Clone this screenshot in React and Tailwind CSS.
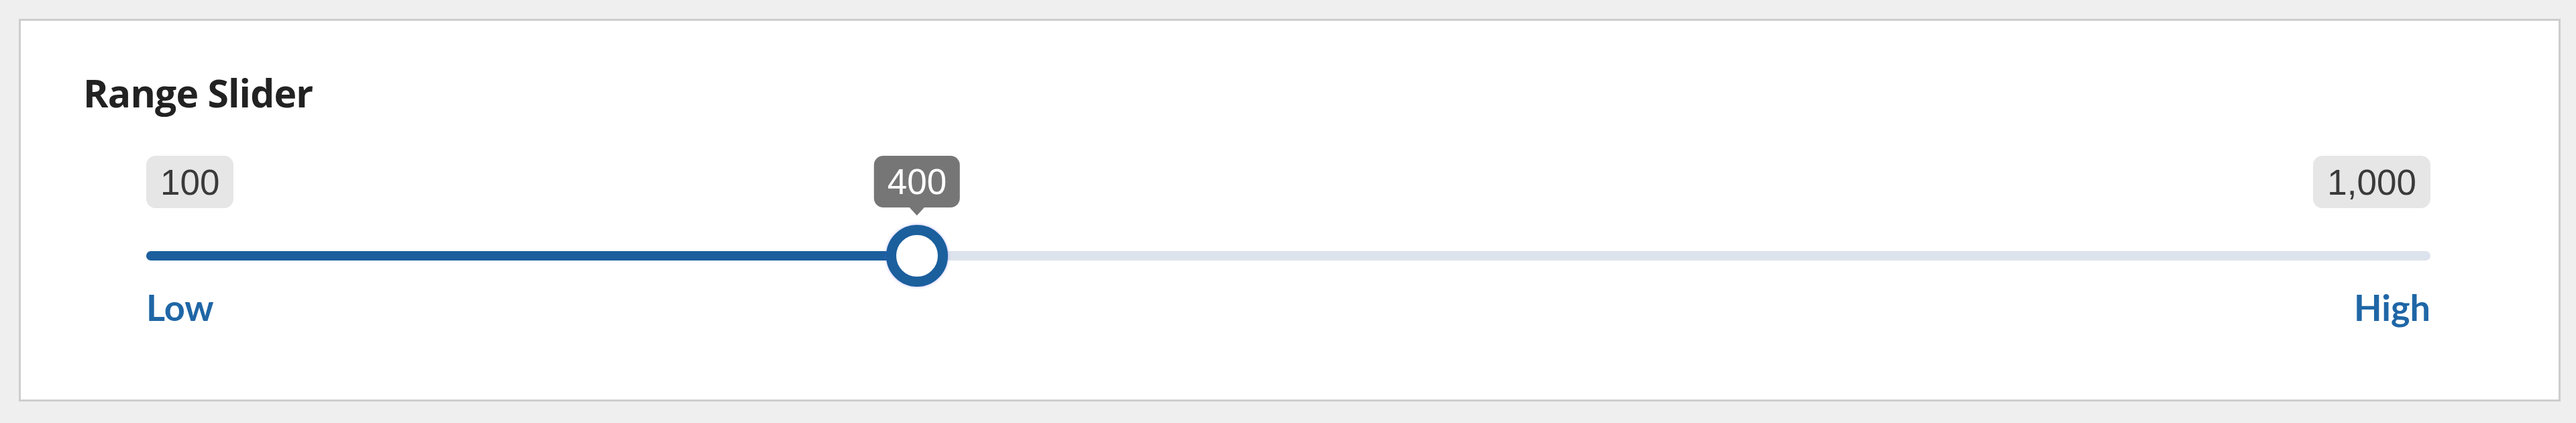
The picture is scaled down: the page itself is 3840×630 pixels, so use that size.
import React from 'react';

const RangeSlider = ({ min, max, value }) => {
  return (
    <div className="ml-[94px] mr-[191px]">
      {/* Bubbles above the track */}
      <div className="relative flex h-[78px] justify-between font-['Liberation_Sans',Arial,sans-serif] text-[53px] leading-none text-[#3a3a3a]">
        <span className="flex h-[78px] items-center rounded-[14px] bg-[#e6e6e6] px-[21px]">{min}</span>
        <div className="absolute top-0 left-[1149px] -translate-x-1/2">
          <div className="flex h-[77px] items-center rounded-[14px] bg-[#767676] px-[20px] text-white">{value}</div>
          <div className="mx-auto h-0 w-0 border-x-[11px] border-t-[12px] border-x-transparent border-t-[#767676]"></div>
        </div>
        <span className="flex h-[78px] items-center rounded-[14px] bg-[#e6e6e6] px-[21px]">{max}</span>
      </div>

      {/* Track */}
      <div className="relative mt-[24px] flex h-[94px] items-center">
        <div className="h-[14px] w-full rounded-full bg-[#dde3ec]"></div>
        <div className="absolute left-0 h-[14px] w-[1149px] rounded-full bg-[#1b5f9d]"></div>
        <div className="absolute left-[1149px] h-[92px] w-[92px] -translate-x-1/2 rounded-full border-[15px] border-[#1b5f9d] bg-white shadow-[0_0_4px_rgba(100,90,255,0.45)]"></div>
      </div>

      <div className="mt-[3px] flex justify-between font-['Lato',sans-serif] text-[54px] font-bold leading-none text-[#1f66a6]">
        <span>Low</span>
        <span>High</span>
      </div>
    </div>
  );
};

export default function App() {
  return (
    <div className="h-[630px] bg-[#efefef] pt-[28px] pr-[23px] pl-[28px]">
      <div className="h-[570px] border-[3px] border-[#cdcdcd] bg-white pl-[93px] pt-[79px]">
        <h2 className="mb-[65px] font-['Open_Sans',sans-serif] text-[57px] font-bold leading-none tracking-[-0.8px] text-[#222]">Range Slider</h2>
        <RangeSlider min="100" max="1,000" value="400" />
      </div>
    </div>
  );
}
